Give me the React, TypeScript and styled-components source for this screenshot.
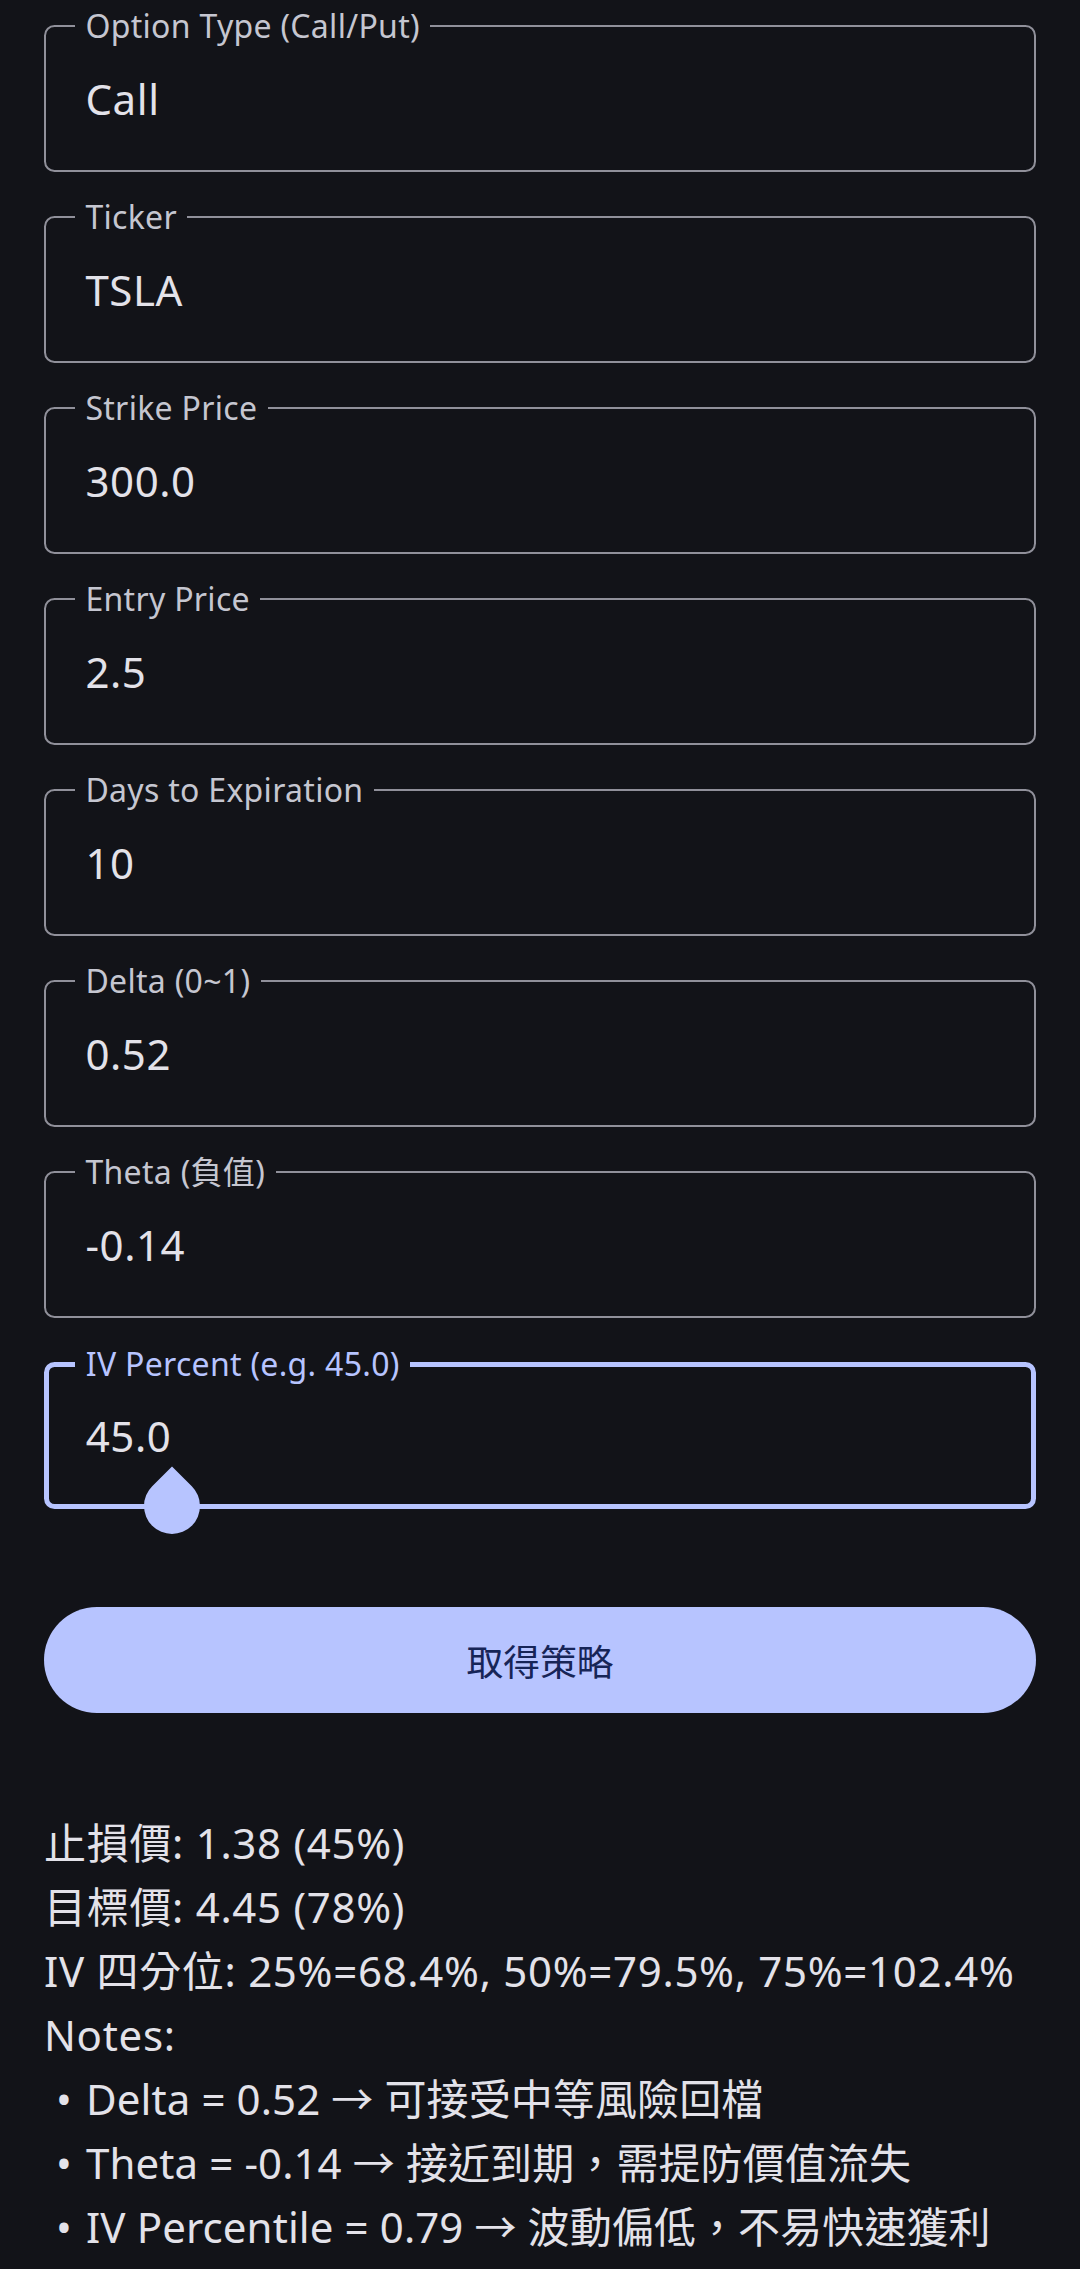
import React from "react";
import styled, { createGlobalStyle } from "styled-components";

const C = {
  bg: "#121318",
  text: "#e3e2e9",
  label: "#c5c6d0",
  outline: "#90909a",
  primary: "#b7c4ff",
  onPrimary: "#172557",
};

const Global = createGlobalStyle`
  html, body { margin: 0; padding: 0; background: ${C.bg}; }
  body { font-family: "Noto Sans", "Noto Sans CJK TC", sans-serif; color: ${C.text}; }
  * { box-sizing: border-box; }
`;

const Page = styled.div`
  min-height: 2269px;
  background: ${C.bg};
  padding: 25px 44px 0 44px;
  display: flex;
  flex-direction: column;
`;

const Fields = styled.div`
  display: flex;
  flex-direction: column;
  gap: 44px;
`;

const FieldBox = styled.div<{ $focused?: boolean }>`
  position: relative;
  height: 147px;
  border: ${(p) => (p.$focused ? "5.25px" : "2.6px")} solid
    ${(p) => (p.$focused ? C.primary : C.outline)};
  border-radius: 10.5px;
  display: flex;
  align-items: center;
  padding: 0 ${(p) => (p.$focused ? 42 - 5.25 : 42 - 2.6)}px;
`;

const FloatLabel = styled.span<{ $focused?: boolean; $bw: number }>`
  position: absolute;
  top: ${(p) => -p.$bw / 2 - 16}px;
  left: ${(p) => 31.5 - p.$bw}px;
  padding: 0 10.5px;
  background: ${C.bg};
  font-size: 32px;
  line-height: 32px;
  letter-spacing: 0.3px;
  color: ${(p) => (p.$focused ? C.primary : C.label)};
  white-space: nowrap;
`;

const Value = styled.span`
  font-size: 42px;
  line-height: 56px;
  letter-spacing: 0.6px;
  color: ${C.text};
`;

const Handle = styled.svg`
  position: absolute;
  left: 95px;
  top: 97px;
  width: 56px;
  height: 70px;
`;

const Button = styled.button`
  margin-top: 98px;
  height: 106px;
  width: 100%;
  border: none;
  border-radius: 53px;
  background: ${C.primary};
  color: ${C.onPrimary};
  font-family: "Noto Sans CJK TC", "Noto Sans", sans-serif;
  font-size: 36.75px;
  font-weight: 400;
  display: flex;
  align-items: center;
  justify-content: center;
`;

const Result = styled.div`
  margin-top: 98px;
  font-size: 42px;
  line-height: 64px;
  color: ${C.text};
`;

const Line = styled.div`
  white-space: nowrap;
  letter-spacing: 0.7px;
`;

const Bullet = styled.div`
  display: flex;
  white-space: nowrap;
  padding-left: 12px;
  letter-spacing: 0.1px;
`;

const Dot = styled.span`
  width: 30px;
  flex: none;
`;

type F = { label: string; value: string; focused?: boolean };

const fields: F[] = [
  { label: "Option Type (Call/Put)", value: "Call" },
  { label: "Ticker", value: "TSLA" },
  { label: "Strike Price", value: "300.0" },
  { label: "Entry Price", value: "2.5" },
  { label: "Days to Expiration", value: "10" },
  { label: "Delta (0~1)", value: "0.52" },
  { label: "Theta (負值)", value: "-0.14" },
  { label: "IV Percent (e.g. 45.0)", value: "45.0", focused: true },
];

const notes = [
  "Delta = 0.52 → 可接受中等風險回檔",
  "Theta = -0.14 → 接近到期，需提防價值流失",
  "IV Percentile = 0.79 → 波動偏低，不易快速獲利",
];

export default function App() {
  return (
    <>
      <Global />
      <Page>
        <Fields>
          {fields.map((f) => (
            <FieldBox key={f.label} $focused={f.focused}>
              <FloatLabel $focused={f.focused} $bw={f.focused ? 5.25 : 2.6}>
                {f.label}
              </FloatLabel>
              <Value>{f.value}</Value>
              {f.focused && (
                <Handle viewBox="0 0 56 70">
                  <path
                    d="M28 2.4 L47.8 22.2 A28 28 0 1 1 8.2 22.2 Z"
                    fill={C.primary}
                  />
                </Handle>
              )}
            </FieldBox>
          ))}
        </Fields>
        <Button>取得策略</Button>
        <Result>
          <Line>止損價: 1.38 (45%)</Line>
          <Line>目標價: 4.45 (78%)</Line>
          <Line>IV 四分位: 25%=68.4%, 50%=79.5%, 75%=102.4%</Line>
          <Line>Notes:</Line>
          {notes.map((n) => (
            <Bullet key={n}>
              <Dot>•</Dot>
              <span>{n}</span>
            </Bullet>
          ))}
        </Result>
      </Page>
    </>
  );
}
